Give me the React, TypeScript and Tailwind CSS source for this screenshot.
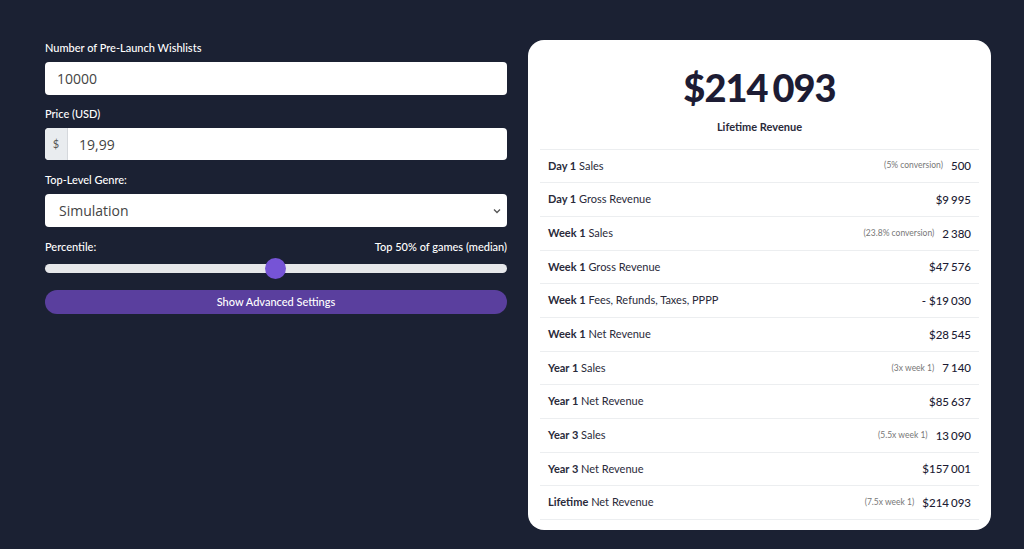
const rows = [
  { bold: "Day 1", rest: "Sales", note: "(5% conversion)", value: "500" },
  { bold: "Day 1", rest: "Gross Revenue", value: "$9 995" },
  { bold: "Week 1", rest: "Sales", note: "(23.8% conversion)", value: "2 380" },
  { bold: "Week 1", rest: "Gross Revenue", value: "$47 576" },
  { bold: "Week 1", rest: "Fees, Refunds, Taxes, PPPP", value: "- $19 030" },
  { bold: "Week 1", rest: "Net Revenue", value: "$28 545" },
  { bold: "Year 1", rest: "Sales", note: "(3x week 1)", value: "7 140" },
  { bold: "Year 1", rest: "Net Revenue", value: "$85 637" },
  { bold: "Year 3", rest: "Sales", note: "(5.5x week 1)", value: "13 090" },
  { bold: "Year 3", rest: "Net Revenue", value: "$157 001" },
  { bold: "Lifetime", rest: "Net Revenue", note: "(7.5x week 1)", value: "$214 093" },
];

// thousands separated by a thin gap instead of a full space
function Amount({ text, gap }: { text: string; gap: string }) {
  const groups = text.split(/(?<=\d) (?=\d)/);
  return (
    <span className="inline-flex">
      {groups.map((g, i) => (
        <span key={i} className={i > 0 ? gap : ""}>
          {g}
        </span>
      ))}
    </span>
  );
}

function Label({ children }: { children: React.ReactNode }) {
  return <label className="block text-[11px] leading-[16px] font-medium text-white mb-[6px]">{children}</label>;
}

export default function App() {
  return (
    <div className="min-h-[549px] w-full bg-[#1b2133] font-['Lato',sans-serif] flex gap-[21px] pl-[45px] pt-[40px]">
      {/* inputs */}
      <div className="w-[462px]">
        <Label>Number of Pre-Launch Wishlists</Label>
        <div className="h-[33px] rounded-[4px] bg-white flex items-center px-[12px] text-[14px] text-[#444] font-['Open_Sans',sans-serif]">
          10000
        </div>

        <div className="mt-[11px]">
          <Label>Price (USD)</Label>
          <div className="h-[32px] rounded-[4px] bg-white flex overflow-hidden">
            <div className="w-[23px] bg-[#e9ecef] border-r border-[#d5d8dc] flex items-center justify-center text-[11px] text-[#555]">
              $
            </div>
            <div className="flex items-center pl-[11px] text-[14px] text-[#444] font-['Open_Sans',sans-serif]">19,99</div>
          </div>
        </div>

        <div className="mt-[12px]">
          <Label>Top-Level Genre:</Label>
          <div className="h-[33px] rounded-[4px] bg-white flex items-center justify-between pl-[14px] pr-[6px] text-[14px] text-[#444] font-['Open_Sans',sans-serif]">
            <span>Simulation</span>
            <svg width="8" height="6" viewBox="0 0 8 6" fill="none" stroke="#555" strokeWidth="1.3">
              <path d="M1 1.5 L4 4.5 L7 1.5" />
            </svg>
          </div>
        </div>

        <div className="mt-[12px] flex justify-between text-[11px] leading-[16px] font-medium text-white">
          <span>Percentile:</span>
          <span>Top 50% of games (median)</span>
        </div>
        <div className="relative mt-[3px] h-[21px] flex items-center">
          <div className="h-[9px] w-full rounded-full bg-[#e6e7ea]" />
          <div className="absolute left-[220px] top-0 h-[21px] w-[21px] rounded-full bg-[#7654d6]" />
        </div>

        <button className="mt-[11px] h-[24px] w-full rounded-full bg-[#5a3f9e] text-[11px] font-medium text-white">
          Show Advanced Settings
        </button>
      </div>

      {/* results card */}
      <div className="w-[463px] h-[490px] rounded-[16px] bg-white px-[12px] pt-[24px]">
        <div className="flex justify-center text-[38px] leading-[46px] font-black text-[#1d1c34] tracking-[-1px]">
          <Amount text="$214 093" gap="ml-[5px]" />
        </div>
        <div className="mt-[9px] text-center text-[11px] font-bold text-[#2a2a3a]">Lifetime Revenue</div>
        <div className="mt-[13px] border-t border-[#eceef0]">
          {rows.map((r) => (
            <div
              key={r.bold + r.rest}
              className="h-[33.7px] flex items-center justify-between px-[8px] border-b border-[#eceef0] text-[11px] text-[#2a2a3a]"
            >
              <span>
                <span className="font-bold">{r.bold}</span> {r.rest}
              </span>
              <span className="flex items-center gap-[8px]">
                {r.note && <span className="text-[8.5px] text-[#777]">{r.note}</span>}
                <span className="text-[11.5px] font-medium text-[#1d1c34]">
                  <Amount text={r.value} gap="ml-[2px]" />
                </span>
              </span>
            </div>
          ))}
        </div>
      </div>
    </div>
  );
}
